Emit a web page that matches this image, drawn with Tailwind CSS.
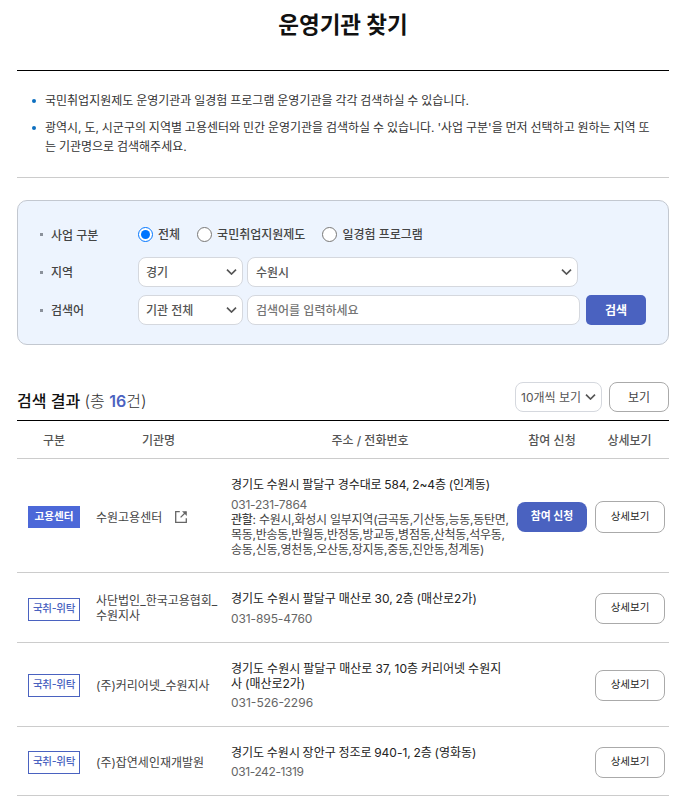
<!DOCTYPE html>
<html lang="ko">
<head>
    <meta charset="UTF-8">
    <meta name="viewport" content="width=device-width, initial-scale=1.0">
    <title>운영기관 찾기</title>
    <script src="https://cdn.jsdelivr.net/npm/@tailwindcss/browser@4"></script>
</head>
<body class="bg-white font-['Inter','Noto_Sans_CJK_KR',sans-serif] text-[12px] leading-[15px] text-[#444] overflow-hidden">
    <div class="w-[652px] ml-[17px] h-[802px]">
        <h1 class="h-[70px] pt-[8px] text-center text-[22.5px] leading-[34px] font-bold text-[#111]">운영기관 찾기</h1>

        <!-- Guide -->
        <ul class="h-[108px] border-t border-t-black border-b border-b-[#ccc] pl-[15px] pr-[10px] pt-[20px] leading-[19px] text-[#333] [word-spacing:-0.5px]">
            <li class="flex gap-[9px] mb-[8px]">
                <span class="mt-[8px] size-[4px] shrink-0 rounded-full bg-[#0c6fc0]"></span>
                <span>국민취업지원제도 운영기관과 일경험 프로그램 운영기관을 각각 검색하실 수 있습니다.</span>
            </li>
            <li class="flex gap-[9px]">
                <span class="mt-[8px] size-[4px] shrink-0 rounded-full bg-[#0c6fc0]"></span>
                <span class="whitespace-nowrap">광역시, 도, 시군구의 지역별 고용센터와 민간 운영기관을 검색하실 수 있습니다. '사업 구분'을 먼저 선택하고 원하는 지역 또<br>는 기관명으로 검색해주세요.</span>
            </li>
        </ul>

        <!-- Search Form -->
        <form class="mt-[22px] h-[145px] rounded-[10px] border border-[#c3c8d0] bg-[#edf4fe] pl-[22px] pt-[18px] font-medium">
            <div class="flex h-[30px] items-center">
                <span class="mr-[8px] size-[3px] bg-[#8b919b]"></span>
                <span class="w-[87px] pt-[2px]">사업 구분</span>
                <label class="flex items-center"><input type="radio" name="biz" class="mr-[5px] size-[15px]" checked>전체</label>
                <label class="ml-[17px] flex items-center"><input type="radio" name="biz" class="mr-[5px] size-[15px]">국민취업지원제도</label>
                <label class="ml-[17px] flex items-center"><input type="radio" name="biz" class="mr-[5px] size-[15px]">일경험 프로그램</label>
            </div>
            <div class="mt-[8px] flex h-[30px] items-center">
                <span class="mr-[8px] size-[3px] bg-[#8b919b]"></span>
                <span class="w-[87px]">지역</span>
                <div class="flex h-[30px] w-[105px] items-center justify-between rounded-[8px] border border-[#d5d8de] bg-white pl-[7px] pr-[5px] text-[#555]">
                    <span>경기</span>
                    <svg class="h-[6px] w-[11px]" viewBox="0 0 11 6" fill="none" stroke="#555" stroke-width="1.7"><path d="M1 .7 5.5 5 10 .7"/></svg>
                </div>
                <div class="ml-[4px] flex h-[30px] w-[331px] items-center justify-between rounded-[8px] border border-[#d5d8de] bg-white pl-[8px] pr-[5px] text-[#555]">
                    <span>수원시</span>
                    <svg class="h-[6px] w-[11px]" viewBox="0 0 11 6" fill="none" stroke="#555" stroke-width="1.7"><path d="M1 .7 5.5 5 10 .7"/></svg>
                </div>
            </div>
            <div class="mt-[8px] flex h-[30px] items-center">
                <span class="mr-[8px] size-[3px] bg-[#8b919b]"></span>
                <span class="w-[87px] pt-[1px]">검색어</span>
                <div class="flex h-[30px] w-[105px] items-center justify-between rounded-[8px] border border-[#d5d8de] bg-white pl-[7px] pr-[5px] text-[#555]">
                    <span>기관 전체</span>
                    <svg class="h-[6px] w-[11px]" viewBox="0 0 11 6" fill="none" stroke="#555" stroke-width="1.7"><path d="M1 .7 5.5 5 10 .7"/></svg>
                </div>
                <input type="text" placeholder="검색어를 입력하세요" class="ml-[4px] h-[30px] w-[333px] rounded-[8px] border border-[#d5d8de] bg-white px-[8px] placeholder:text-[#757575]">
                <button type="button" class="ml-[6px] h-[30px] w-[60px] rounded-[5px] bg-[#4a62c0] font-bold text-white">검색</button>
            </div>
        </form>

        <!-- Result Header -->
        <div class="mt-[37px] flex h-[38px]">
            <h2 class="flex-1 pt-[7px] text-[16px] leading-[24px] font-medium text-[#111]">검색 결과 <span class="font-light text-[#333]">(총 </span><span class="font-semibold text-[#4a62c0]">16</span><span class="font-light text-[#333]">건)</span></h2>
            <div class="flex h-[30px] w-[87px] items-center justify-between rounded-[8px] border border-[#d5d8de] pl-[5px] pr-[5px] whitespace-nowrap text-[#555]">
                <span>10개씩 보기</span>
                <svg class="h-[6px] w-[11px]" viewBox="0 0 11 6" fill="none" stroke="#555" stroke-width="1.7"><path d="M1 .7 5.5 5 10 .7"/></svg>
            </div>
            <button type="button" class="ml-[7px] h-[30px] w-[60px] rounded-[8px] border border-[#aaa]">보기</button>
        </div>

        <!-- Result Table -->
        <div class="grid h-[39px] grid-cols-[74px_135px_288px_76px_79px] items-center border-t border-t-black border-b border-b-[#ccc] pt-px text-center font-medium text-[#555]">
            <span>구분</span>
            <span>기관명</span>
            <span>주소 / 전화번호</span>
            <span>참여 신청</span>
            <span>상세보기</span>
        </div>

        <div class="grid h-[114px] grid-cols-[74px_135px_288px_76px_79px] items-center border-b border-[#ccc] pt-[3px]">
            <span class="ml-[11px] h-[22px] w-[52px] bg-[#4c68d8] text-center text-[10.6px] leading-[21px] font-bold text-white">고용센터</span>
            <span class="flex items-center pl-[5px]">수원고용센터
                <svg class="ml-[13px] size-[12px]" viewBox="0 0 12 12" fill="none" stroke="#666" stroke-width="1.3"><path d="M4.8.7H.7v10.6h10.6V7.2M11 1 5.6 6.4"/><path d="M7 .2h4.8V5z" fill="#666" stroke="none"/></svg>
            </span>
            <div class="pl-[5px] whitespace-nowrap">
                <p class="mb-[5px] text-[#222] tracking-[-0.1px] [word-spacing:-0.5px]">경기도 수원시 팔달구 경수대로 584, 2~4층 (인계동)</p>
                <p class="text-[#666] tracking-[-0.25px]">031-231-7864</p>
                <p class="tracking-[-0.25px]"><span class="font-medium">관할</span>: 수원시,화성시 일부지역(금곡동,기산동,능동,동탄면,<br>목동,반송동,반월동,반정동,방교동,병점동,산척동,석우동,<br>송동,신동,영천동,오산동,장지동,중동,진안동,청계동)</p>
            </div>
            <button class="ml-[3px] h-[30px] w-[70px] rounded-[8px] bg-[#4a62c0] pb-[2px] text-[10.8px] font-bold text-white">참여 신청</button>
            <button class="ml-[5px] h-[32px] w-[70px] rounded-[8px] border border-[#aaa] pb-[2px] text-[10.5px] text-[#222]">상세보기</button>
        </div>

        <div class="grid h-[70px] grid-cols-[74px_135px_288px_76px_79px] items-center border-b border-[#ccc] pt-px">
            <span class="relative top-px ml-[11px] h-[23px] w-[52px] border border-[#4a62c0] text-center text-[10.5px] leading-[20px] font-medium tracking-[-0.3px] text-[#4a62c0]">국취-위탁</span>
            <span class="pl-[5px] whitespace-nowrap">사단법인_한국고용협회_<br>수원지사</span>
            <div class="pl-[5px] whitespace-nowrap">
                <p class="mb-[5px] text-[#222] [word-spacing:-0.6px]">경기도 수원시 팔달구 매산로 30, 2층 (매산로2가)</p>
                <p class="text-[#666] tracking-[-0.1px]">031-895-4760</p>
            </div>
            <button class="col-start-5 ml-[5px] h-[31px] w-[70px] rounded-[8px] border border-[#aaa] pb-[2px] text-[10.5px] text-[#222]">상세보기</button>
        </div>

        <div class="grid h-[84px] grid-cols-[74px_135px_288px_76px_79px] items-center border-b border-[#ccc] pt-px">
            <span class="ml-[11px] h-[23px] w-[52px] border border-[#4a62c0] text-center text-[10.5px] leading-[20px] font-medium tracking-[-0.3px] text-[#4a62c0]">국취-위탁</span>
            <span class="pl-[5px] whitespace-nowrap">(주)커리어넷_수원지사</span>
            <div class="pl-[5px] whitespace-nowrap">
                <p class="mb-[4px] text-[#222] [word-spacing:-0.4px]">경기도 수원시 팔달구 매산로 37, 10층 커리어넷 수원지<br>사 (매산로2가)</p>
                <p class="text-[#666]">031-526-2296</p>
            </div>
            <button class="col-start-5 ml-[5px] h-[31px] w-[70px] rounded-[8px] border border-[#aaa] pb-[2px] text-[10.5px] text-[#222]">상세보기</button>
        </div>

        <div class="grid h-[69px] grid-cols-[74px_135px_288px_76px_79px] items-center border-b border-[#ccc] pt-[2px]">
            <span class="ml-[11px] h-[23px] w-[52px] border border-[#4a62c0] text-center text-[10.5px] leading-[20px] font-medium tracking-[-0.3px] text-[#4a62c0]">국취-위탁</span>
            <span class="pl-[5px] whitespace-nowrap">(주)잡연세인재개발원</span>
            <div class="pl-[5px] pb-px whitespace-nowrap">
                <p class="mb-[4px] text-[#222] [word-spacing:-0.7px]">경기도 수원시 장안구 정조로 940-1, 2층 (영화동)</p>
                <p class="text-[#666] tracking-[-0.4px]">031-242-1319</p>
            </div>
            <button class="col-start-5 ml-[5px] h-[31px] w-[70px] rounded-[8px] border border-[#aaa] pb-[2px] text-[10.5px] text-[#222]">상세보기</button>
        </div>
    </div>
</body>
</html>
